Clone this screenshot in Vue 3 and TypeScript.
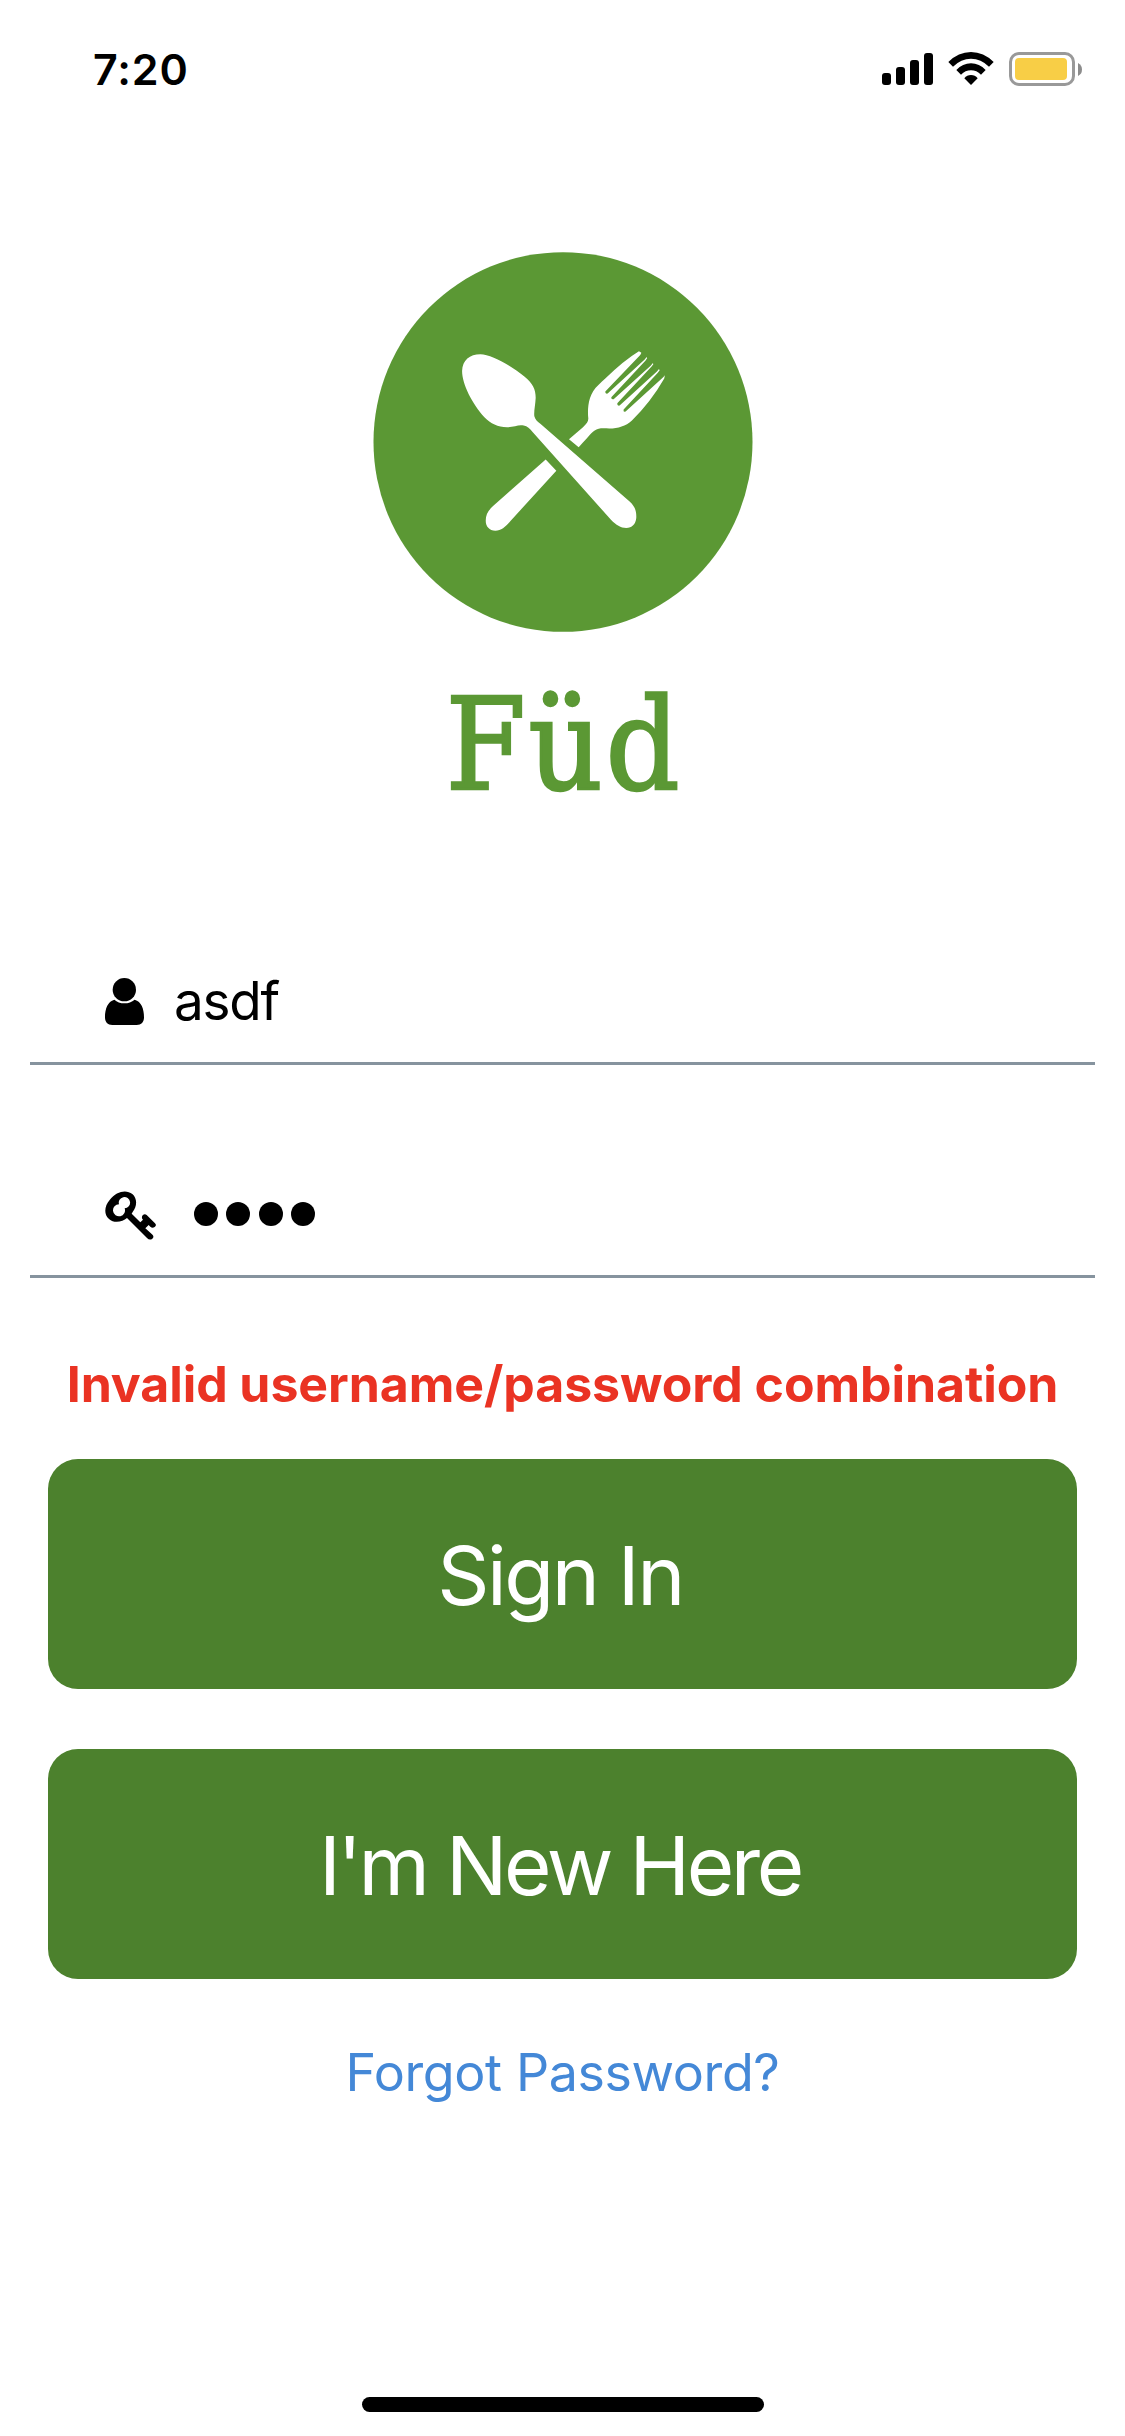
<script setup lang="ts">
import { ref } from 'vue'

const username = ref('asdf')
const passwordLength = ref(4)
const error = ref('Invalid username/password combination')
const signalBars: number[] = [12, 18, 25, 32]
</script>

<template>
  <main class="screen">
    <header class="status">
      <span class="time">7:20</span>
      <div class="indicators">
        <div class="signal">
          <i v-for="h in signalBars" :key="h" :style="{ height: h + 'px' }"></i>
        </div>
        <svg class="wifi" viewBox="0 0 138 99" width="46" height="33">
          <path d="M1 30Q31 0 69 0T137 30L123 44Q99 20 69 20T15 44Z" />
          <path d="M25 54Q44 34 69 34T113 54L99 68Q86 55 69 55T39 68Z" />
          <path d="M49 79Q57 69 69 69T89 79L69 99Z" />
        </svg>
        <div class="battery"><div class="charge"></div></div>
        <svg class="nub" viewBox="0 0 4 13" width="4" height="13"><path d="M0 0Q4 2 4 6.500Q4 11 0 13Z" /></svg>
      </div>
    </header>

    <section class="brand">
      <svg class="logo" viewBox="38 35 1140 1141" width="380" height="380">
        <ellipse cx="608" cy="605.500" rx="569" ry="570" fill="#5b9834" />
        <g fill="#fff">
          <path d="M305 392C306 360 328 342 360 342C392 342 450 375 492 409C517 430 526 447 526 473C525 495 520 515 522 528C524 537 530 543 540 551L808 784C824 799 829 812 828 834C826 853 815 864 798 864C781 863 768 855 752 839L518 577C508 565 501 558 490 556C475 552 461 561 440 561C412 561 391 550 372 531C336 491 305 432 305 392Z" />
          <path d="M556 658L588 692L449 844C435 860 422 872 405 872C387 871 376 860 376 842C376 825 382 812 398 798Z" />
          <path d="M626 597L668 561C679 551 684 545 684 535C682 511 682 479 699 452C707 440 722 427 735 415Q790 361 836 333L846 339L914 404L912 415Q872 485 815 541C796 558 774 565 747 565C726 564 715 563 702 572C690 580 674 603 655 621Z" />
        </g>
        <g fill="#5b9834">
          <path d="M735 454L840 344L846 332L862 346L854 357L742 460Q734 462 735 454Z" />
          <path d="M753 471L856 361L864 349L880 365L872 376L760 477Q752 479 753 471Z" />
          <path d="M771 489L874 379L882 368L898 384L890 394L778 496Q770 498 771 489Z" />
          <path d="M790 508L892 398L901 386L918 401L908 412L796 514Q788 517 790 508Z" />
        </g>
      </svg>
      <h1 class="name">Füd</h1>
    </section>

    <form class="form" @submit.prevent>
      <div class="field">
        <svg class="user" viewBox="0 0 117 141" width="39" height="47">
          <circle cx="58" cy="35" r="35" />
          <path d="M28 65C8 70 0 93 0 118C0 133 8 141 22 141H95C109 141 117 133 117 118C117 93 109 70 89 65Q76 76 58 76T28 65Z" />
        </svg>
        <span class="value">{{ username }}</span>
      </div>
      <div class="field second">
        <svg class="key" viewBox="0 0 153 147" width="51" height="49">
          <path fill-rule="evenodd" d="M14 27C35 0 64-5 82 9C98 23 96 47 83 63L80 68L106 94L114 86Q108 80 113 73Q119 67 125 72L150 97Q156 103 149 108Q142 113 136 107L131 102L121 112L141 130Q149 137 142 143Q134 149 126 141L66 81C53 93 27 98 12 84C-5 69-1 44 14 27ZM42 40A17 17 0 1 1 59 52A18 18 0 1 1 42 40Z" />
        </svg>
        <div class="mask"><i v-for="n in passwordLength" :key="n"></i></div>
      </div>
      <p class="error"><span>{{ error }}</span></p>
      <button class="btn" type="submit"><span class="signin">Sign In</span></button>
      <button class="btn" type="button"><span class="new">I'm New Here</span></button>
      <a class="forgot"><span>Forgot Password?</span></a>
    </form>
    <div class="home"></div>
  </main>
</template>

<style>
body { margin: 0; background: #fff; }
</style>

<style scoped>
.screen {
  width: 1125px;
  height: 2436px;
  box-sizing: border-box;
  display: flex;
  flex-direction: column;
  background: #fff;
  color: #000;
  font-family: Inter, "Liberation Sans", sans-serif;
  overflow: hidden;
}
.status { height: 138px; display: flex; justify-content: space-between; padding: 0 43px 0 93px; }
.time { font-size: 43px; font-weight: 600; line-height: 60px; margin-top: 39px; letter-spacing: 0.900px; }
.indicators { display: flex; align-items: flex-start; padding-top: 52px; }
.signal { display: flex; align-items: flex-end; gap: 5px; height: 33px; }
.signal i { width: 9px; border-radius: 3px; background: #000; }
.wifi { margin-left: 15px; }
.battery { margin-left: 15px; box-sizing: border-box; width: 66px; height: 34px; border: 3px solid #999; border-radius: 10px; padding: 3px; }
.charge { width: 52px; height: 22px; border-radius: 4px; background: #f8ce46; }
.nub { margin: 11px 0 0 3px; fill: #8c8c8c; }
.brand { height: 789px; display: flex; flex-direction: column; align-items: center; }
.logo { margin-top: 114px; flex: none; }
.name {
  margin: 37px 0 0;
  color: #5b9834;
  font-family: "DejaVu Serif Condensed", "DejaVu Serif", serif;
  font-stretch: condensed;
  font-weight: 400;
  font-size: 128px;
  line-height: 152px;
  letter-spacing: 3px;
  padding-left: 3px;
  -webkit-text-stroke: 2.500px #5b9834;
}
.form { display: flex; flex-direction: column; }
.field { height: 138px; box-sizing: border-box; margin: 0 30px; border-bottom: 3px solid #86939e; display: flex; align-items: flex-start; padding-left: 75px; }
.second { margin-top: 75px; }
.user { margin-top: 51px; }
.value { font-size: 53px; line-height: 64px; margin: 42px 0 0 30px; letter-spacing: -1.200px; }
.key { margin-top: 51px; }
.mask { display: flex; gap: 8.300px; margin: 62px 0 0 38px; }
.mask i { width: 24px; height: 24px; border-radius: 50%; background: #000; }
.error { height: 181px; margin: 0; text-align: center; color: #ea3323; font-size: 50px; font-weight: 700; line-height: 60px; padding-top: 76px; box-sizing: border-box; white-space: nowrap; letter-spacing: -0.080px; }
.btn { height: 230px; margin: 0 48px 60px; padding: 3px 5px 0 0; border: 0; border-radius: 30px; background: #4c812d; color: #fff; font-family: inherit; font-size: 81.500px; line-height: 100px; }
.signin { letter-spacing: -2.500px; }
.new { letter-spacing: -3.400px; }
.forgot { text-align: center; color: #4488d7; font-size: 52px; line-height: 64px; margin-top: 2px; letter-spacing: -0.400px; }
.home { width: 402px; height: 15px; border-radius: 8px; background: #000; margin: auto auto 24px; }
</style>
